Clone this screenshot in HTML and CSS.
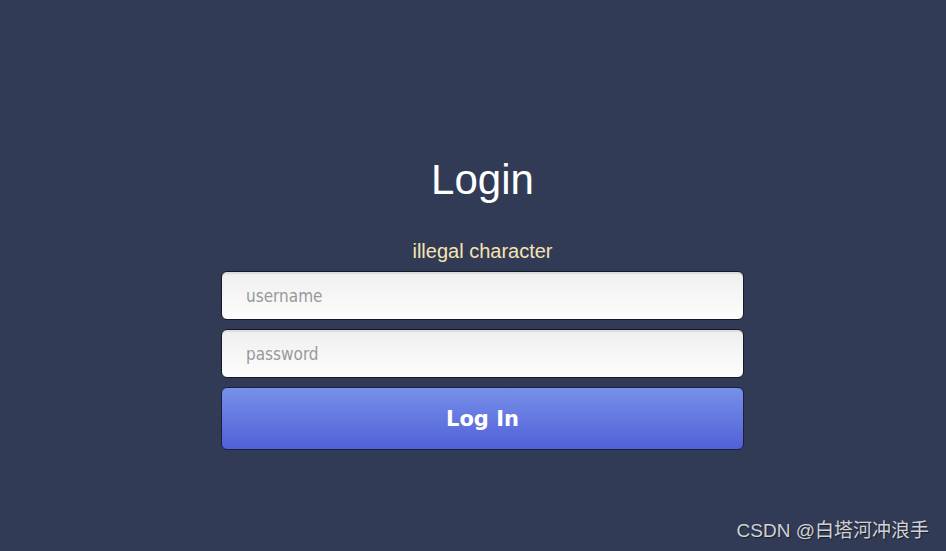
FILE: index.html
```html
<!DOCTYPE html>
<html>
<head>
<meta charset="utf-8">
<link rel="stylesheet" href="styles.css">
</head>
<body>
<div class="page">
  <form class="login">
    <h1 class="title">Login</h1>
    <p class="error">illegal character</p>
    <input class="field" type="text" placeholder="username">
    <input class="field" type="password" placeholder="password">
    <button class="submit" type="button">Log In</button>
  </form>
  <div class="watermark">CSDN @白塔河冲浪手</div>
</div>
</body>
</html>
```

FILE: styles.css
```css
html, body {
  margin: 0;
  padding: 0;
  background: #323b55;
  height: 100%;
}
.page {
  position: relative;
  height: 551px;
  overflow: hidden;
}
.login {
  width: 523px;
  margin: 0 0 0 221px;
  padding-top: 151px;
  display: flex;
  flex-direction: column;
}
.title {
  margin: 0;
  text-align: center;
  font-family: "Liberation Sans", Arial, sans-serif;
  font-weight: normal;
  font-size: 42px;
  line-height: 58px;
  color: #ffffff;
}
.error {
  margin: 32px 0 0 0;
  text-align: center;
  font-family: "Liberation Sans", Arial, sans-serif;
  font-size: 20px;
  line-height: 20px;
  color: #f6e3b2;
}
.field {
  box-sizing: border-box;
  height: 49px;
  margin-top: 10px;
  padding: 0 0 0 24px;
  border: 1px solid #151a29;
  border-radius: 6px;
  background: linear-gradient(#efefef, #fdfdfd);
  box-shadow: inset 0 2px 1px rgba(0,0,0,0.08);
  font-family: "DejaVu Sans", Tahoma, sans-serif;
  font-stretch: condensed;
  font-size: 17px;
  color: #333;
  outline: none;
}
.field + .field {
  margin-top: 9px;
}
.field::placeholder {
  color: #999999;
}
.submit {
  box-sizing: border-box;
  height: 63px;
  margin-top: 9px;
  border: 1px solid #1b2040;
  border-radius: 6px;
  background: linear-gradient(#7890e8, #5060d9);
  font-family: "DejaVu Sans", Tahoma, sans-serif;
  font-weight: bold;
  font-size: 21px;
  color: #ffffff;
  padding: 0;
}
.watermark {
  position: absolute;
  right: 17px;
  bottom: 9px;
  font-family: "Liberation Sans", Arial, "Noto Sans CJK SC", sans-serif;
  font-size: 19px;
  color: #cfd2d8;
  text-shadow: 1px 1px 1px rgba(0,0,0,0.5);
}
```
